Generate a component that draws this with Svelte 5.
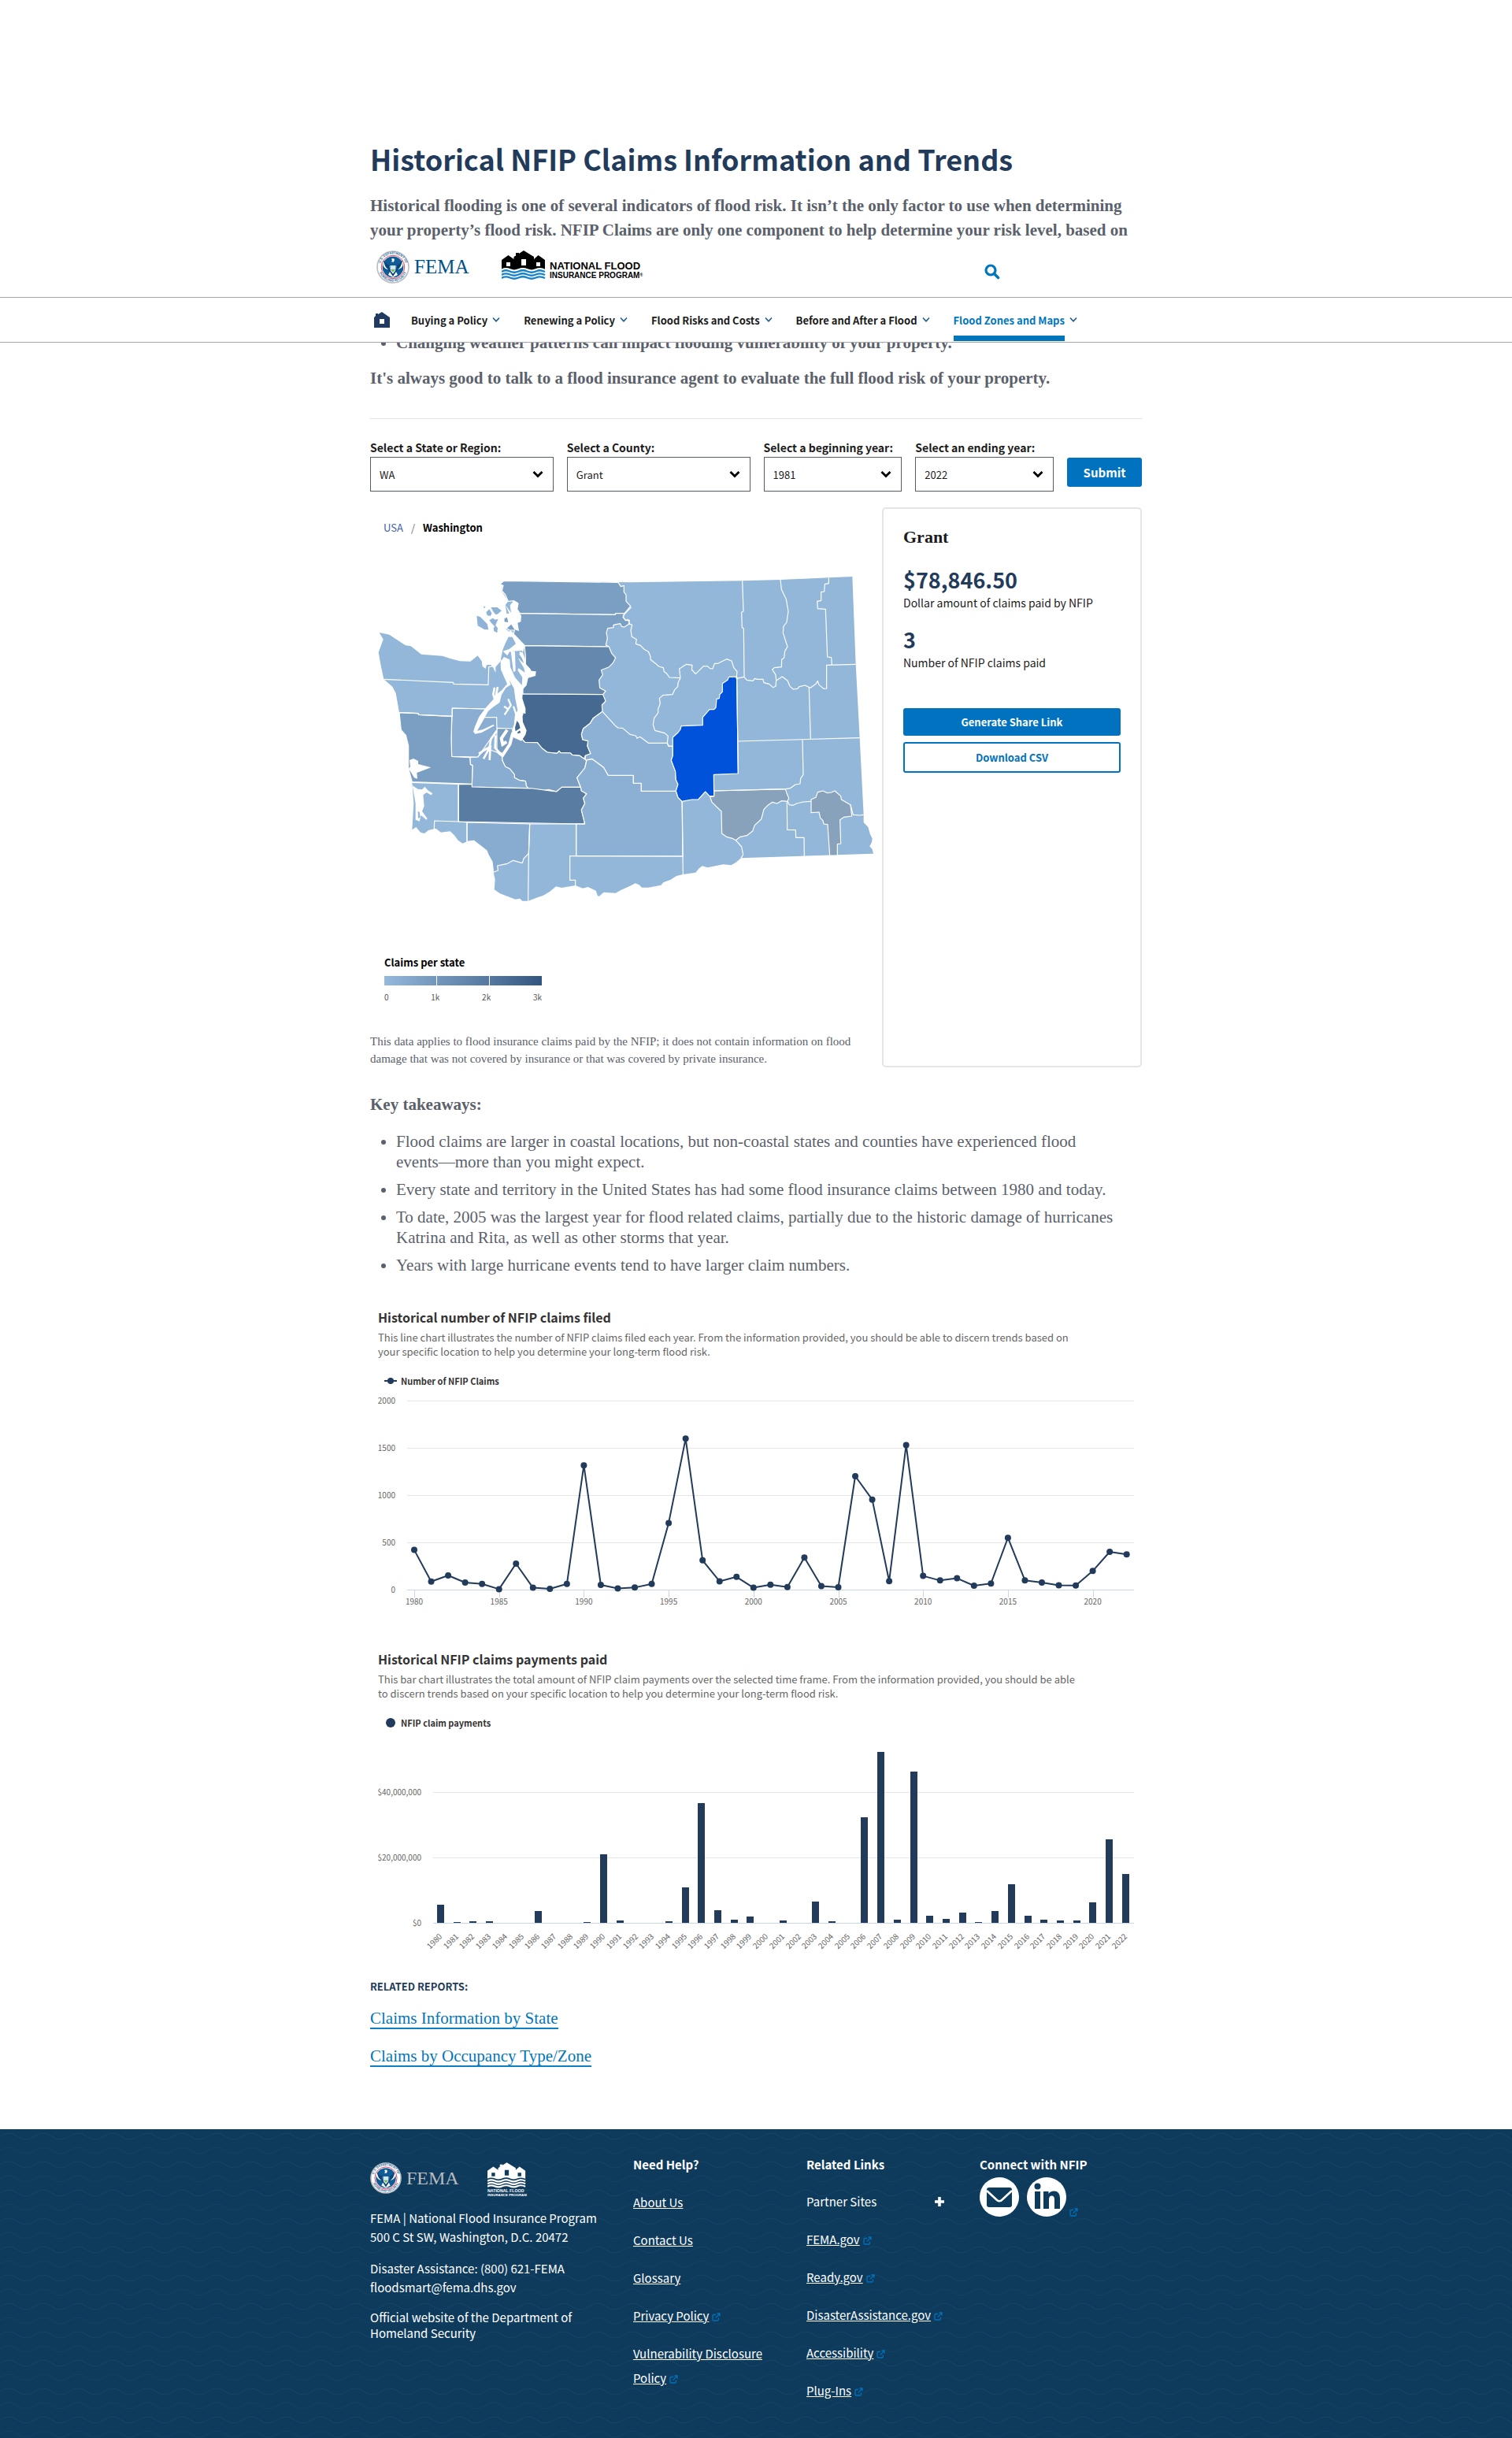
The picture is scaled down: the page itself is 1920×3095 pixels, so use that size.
<script lang="ts">
  const navItems = [
    { label: 'Buying a Policy', active: false },
    { label: 'Renewing a Policy', active: false },
    { label: 'Flood Risks and Costs', active: false },
    { label: 'Before and After a Flood', active: false },
    { label: 'Flood Zones and Maps', active: true }
  ];

  const filters = [
    { id: 'state', label: 'Select a State or Region:', value: 'WA', wide: true },
    { id: 'county', label: 'Select a County:', value: 'Grant', wide: true },
    { id: 'begin', label: 'Select a beginning year:', value: '1981', wide: false },
    { id: 'end', label: 'Select an ending year:', value: '2022', wide: false }
  ];

  const takeaways = [
    'Flood claims are larger in coastal locations, but non-coastal states and counties have experienced flood events—more than you might expect.',
    'Every state and territory in the United States has had some flood insurance claims between 1980 and today.',
    'To date, 2005 was the largest year for flood related claims, partially due to the historic damage of hurricanes Katrina and Rita, as well as other storms that year.',
    'Years with large hurricane events tend to have larger claim numbers.'
  ];

  const helpLinks = [
    { label: 'About Us', external: false },
    { label: 'Contact Us', external: false },
    { label: 'Glossary', external: false },
    { label: 'Privacy Policy', external: true },
    { label: 'Vulnerability Disclosure Policy', external: true }
  ];
  const relatedLinks = ['FEMA.gov', 'Ready.gov', 'DisasterAssistance.gov', 'Accessibility', 'Plug-Ins'];

  const firstYear = 1980;
  const claims = [420, 85, 150, 75, 60, 5, 275, 20, 8, 60, 1315, 50, 12, 22, 60, 705, 1597, 310, 88, 135, 20, 52, 28, 340, 38, 25, 1200, 953, 90, 1530, 145, 97, 120, 42, 65, 548, 98, 75, 45, 43, 197, 400, 373];
  // payments in millions of dollars
  const payments = [5.6, 0.3, 0.5, 0.5, 0, 0, 3.6, 0, 0, 0.3, 21, 0.7, 0, 0, 0.5, 10.9, 36.7, 3.9, 1, 2, 0, 0.7, 0, 6.5, 0.5, 0, 32.3, 52.4, 1, 46.3, 2.2, 1.2, 3.1, 0.3, 3.6, 11.8, 2.2, 1, 0.7, 0.7, 6.3, 25.6, 15];

  const lineX = (i: number) => 56 + i * 21.54;
  const lineY = (v: number) => 256 - v * 0.12;
  const linePoints = claims.map((v, i) => `${lineX(i)},${lineY(v)}`).join(' ');
  const barX = (i: number) => Math.round(85 + i * 20.71);
  const barH = (v: number) => Math.round(v * 4.15);

  // Map polygons; eastern counties are drawn in a group shifted by 990 units.
  const west = [
    { c: '#7b9fc3', p: '540,112 975,118 985,134 997,130 997,155 1005,165 1005,190 1022,208 998,237 966,236 963,241 600,236 590,220 594,198 578,188 556,190 545,165 532,150 537,130 525,125' },
    { c: '#7ca0c4', p: '590,236 963,241 966,236 1000,236 993,250 1003,263 1013,260 1018,275 998,288 988,286 983,275 957,280 957,290 935,293 930,310 934,330 928,357 940,363 618,359 575,320 580,300 560,300 540,285 540,255 570,240' },
    { c: '#6589ae', p: '618,359 940,363 950,388 965,405 955,425 940,440 910,452 916,470 902,490 905,520 927,532 917,545 612,543 612,500 640,450 622,430 622,400' },
    { c: '#456990', p: '600,543 917,545 927,570 913,585 915,610 880,635 868,655 842,675 835,697 840,717 860,722 858,742 870,770 850,778 845,790 828,778 800,775 793,768 755,767 750,760 742,769 705,765 685,750 667,728 620,727 600,705 600,640 612,620' },
    { c: '#7a9dc2', p: '575,705 600,705 620,727 667,728 685,750 705,765 742,769 750,760 755,767 793,768 800,775 828,778 845,790 855,795 848,825 818,862 832,898 760,898 740,915 710,907 690,911 632,902 625,893 622,875 600,872 580,862 580,850 562,828 545,820 533,795 533,782 513,765 513,673 575,675' },
    { c: '#89add0', p: '410,785 440,783 470,750 513,765 533,782 533,795 545,820 562,828 580,850 580,862 600,872 622,875 625,893 632,902 418,897 420,815 412,812' },
    { c: '#8aadd1', p: '343,597 475,600 455,632 512,632 513,680 440,783 341,781 339,715' },
    { c: '#7b9fc3', p: '141,614 213,617 215,622 341,628 339,715 341,781 410,785 412,812 420,815 418,886 190,878 176,827 176,740 166,700 148,680' },
    { c: '#587ca2', p: '367,886 418,887 418,897 650,903 710,911 740,915 760,898 832,898 835,912 855,923 842,940 848,960 835,985 848,1035 838,1038 367,1029' },
    { c: '#88acd0', p: '399,1032 638,1038 634,1150 615,1170 610,1187 575,1177 550,1190 535,1193 515,1197 517,1215 500,1222 495,1182 480,1155 474,1140 455,1125 425,1102 399,1105' },
    { c: '#8cb0d4', p: '855,795 875,790 900,808 920,823 937,853 1033,853 1033,883 1063,883 1063,913 1195,913 1203,937 1218,952 1221,1161 815,1160 815,1038 848,1038 835,985 848,960 842,940 855,923 835,912 832,898 818,862 848,825' },
    { c: '#8db1d4', p: '915,610 965,665 975,672 992,673 1020,697 1042,702 1047,712 1058,706 1090,730 1162,730 1167,742 1183,742 1183,778 1177,795 1193,838 1195,870 1203,887 1195,913 1063,913 1063,883 1033,883 1033,853 937,853 920,823 900,808 875,790 850,795 850,778 870,770 858,742 860,722 840,717 835,697 842,675 868,655 880,635' }
  ];
  const westLines = [
    '82,487 347,499 348,505 480,508 482,440 500,437',
    '141,614 213,617 215,622 343,628 343,597 475,600',
    '191,880 366,886 366,1029 275,1026 274,1062',
    '366,1029 399,1032 399,1105',
    '638,1038 634,1150 632,1331',
    '638,1038 848,1038',
    '815,1038 815,1160',
    '1222,1161 791,1160 791,1252 812,1252 812,1274'
  ];
  const east = [
    { c: '#88a2bb', p: '350,912 622,905 627,920 635,940 630,952 607,950 590,960 573,955 555,967 540,982 530,1020 505,1043 497,1065 475,1082 450,1087 433,1100 420,1093 400,1088 380,1075 378,990 342,955 335,935 350,932' },
    { c: '#88a2bb', p: '720,945 738,937 745,917 765,912 782,920 797,918 810,912 833,932 835,945 870,965 875,1008 845,1012 830,1022 833,1113 820,1115 820,1158 791,1158 783,1040 768,1038 765,1025 755,1015 750,993 720,995' },
    { c: '#0052da', p: '437,478 407,478 402,490 382,503 382,535 372,545 370,560 360,562 357,595 350,602 333,602 307,632 307,662 225,665 222,678 213,690 193,708 193,778 187,795 203,838 205,870 213,887 205,912 213,937 228,952 265,945 290,945 317,915 333,932 350,932 349,850 442,846' }
  ];
  const eastLines = [
    '35,212 5,243 5,253 15,263 28,262 25,275 38,280 33,300 37,325 55,335 52,352 70,358 83,372 100,382 108,400 108,412 125,425 140,438 157,443 160,458 170,465 180,480 222,482',
    '222,482 218,447 245,430 267,433 265,450 280,467 310,437 325,437 335,446 345,447 352,427 365,427 398,410 417,417 425,442 438,458 435,484 465,478',
    '458,112 462,228 455,232 457,290 463,293 465,478',
    '222,482 213,500 212,515 200,527 192,545 155,548 142,560 145,580 137,600 137,615 122,635 118,660 125,682 162,692 175,703 172,730 177,742 193,742',
    '437,478 442,846',
    '603,108 607,145 625,182 633,228 627,270 615,285 613,310 630,363 620,380 617,405 608,412 607,440 580,443 572,450 585,470 587,492',
    '465,478 475,490 498,493 505,484 515,487 537,487 540,500 560,505 575,518 585,514 587,492 610,477 630,492 640,515 652,525 668,523 675,515 697,510 717,520 738,505 745,493 750,508 768,523 779,522 779,433 890,430',
    '787,100 787,122 772,125 770,153 758,155 758,187 743,190 745,218 775,220 782,402 797,404 799,432',
    '712,517 718,715',
    '441,723 905,710',
    '687,718 690,850 680,865 678,885 660,888 640,902 622,905 350,912',
    '630,952 637,965 652,967 665,960 690,954 718,952',
    '870,965 880,1003 905,1005 920,1003',
    '229,952 231,1161 232,1230',
    '433,1100 455,1125 461,1155 453,1168',
    '628,955 629,1060 661,1061 662,1090 693,1090 694,1162'
  ];
  const stateOutline =
    '540,112 1020,118 1448,112 1593,108 1777,100 1867,96 1880,430 1895,710 1910,1003 1910,1032 1927,1050 1935,1078 1943,1093 1941,1108 1933,1123 1943,1135 1947,1151 1443,1168 1423,1185 1405,1195 1375,1192 1315,1204 1295,1198 1282,1208 1270,1223 1222,1230 1197,1236 1175,1250 1148,1260 1138,1271 1090,1280 1065,1280 1055,1270 1040,1264 1020,1274 985,1290 965,1301 920,1298 903,1313 897,1312 890,1292 860,1278 840,1283 812,1272 760,1281 738,1276 715,1295 690,1310 668,1318 632,1331 610,1331 600,1322 583,1325 525,1303 503,1288 506,1250 500,1222 495,1182 480,1155 474,1140 455,1125 425,1102 400,1105 382,1112 365,1100 350,1080 335,1066 300,1070 280,1055 252,1062 237,1074 222,1070 205,1050 190,1060 196,960 190,880 176,827 176,740 166,700 148,680 141,614 128,540 115,515 82,487 70,430 62,385 80,335 65,309 103,317 165,358 185,361 225,392 305,398 335,408 372,418 412,419 440,397 458,418 500,420 527,415 535,375 545,350 565,310 540,290 540,255 550,235 545,205 556,190 530,150 535,130 525,125';
  const water = [
    '545,203 567,234 563,205 577,188 594,196 590,222 606,245 604,268 592,272 597,303 580,298 568,278 545,298 526,290 540,268 556,270 552,252 538,250 540,238 560,236',
    '565,300 620,357 612,385 608,378 575,380 560,383 553,397 536,380 560,372 585,352 572,326 548,325 532,345',
    '440,397 456,405 520,392 530,415 508,440 508,462 498,442 490,432 474,432 470,447 458,438 455,418',
    '600,382 611,385 620,408 622,430 645,455 662,457 660,474 632,482 626,510 612,525 610,560 622,598 622,618 610,616 612,650 626,682 622,698 606,722 575,708 570,682 578,660 582,622 592,606 583,560 578,522 560,490 566,508 547,520 531,545 523,576 500,592 480,608 457,650 438,683 460,678 500,659 503,664 455,690 430,695 423,686 430,665 445,630 470,596 498,565 510,545 532,528 552,505 528,450 527,420 540,402 562,412 564,440 582,480 608,510 610,480 592,452 596,445 620,462 616,445 596,410',
    '566,380 582,382 584,455 576,460',
    '180,795 195,789 213,798 213,810 262,823 208,843 210,866 198,862 185,840 176,828 183,820',
    '191,892 212,905 228,907 238,896 250,910 268,922 262,928 245,918 232,928 236,970 228,990 248,1018 244,1022 224,1005 218,1028 203,1022 203,960'
  ];
</script>

{#snippet chevron()}
  <svg class="chev" viewBox="0 0 10 8" width="10" height="8" aria-hidden="true"><path d="M1 1.5 5 5.8 9 1.5" fill="none" stroke="#1f5b8c" stroke-width="1.6" /></svg>
{/snippet}

{#snippet ext()}
  <svg class="ext" viewBox="0 0 11 11" width="11" height="11" aria-hidden="true"><path d="M5 2.5H2.2q-1.2 0-1.2 1.2v5.1q0 1.2 1.2 1.2h5q1.2 0 1.2-1.2V6.5M6.5 1H10v3.5M10 1 4.8 6.6" fill="none" stroke="#0072bc" stroke-width="1.3" /></svg>
{/snippet}

{#snippet seal(size: number)}
  <svg viewBox="0 0 42 42" width={size} height={size} aria-hidden="true">
    <defs>
      <path id="ring-top-{size}" d="M4.4 21a16.6 16.6 0 0 1 33.2 0" />
      <path id="ring-low-{size}" d="M2.6 21a18.4 18.4 0 0 0 36.8 0" />
    </defs>
    <circle cx="21" cy="21" r="20" fill="#fff" stroke="#b9bcc0" stroke-width="1.6" />
    <text class="ring"><textPath href="#ring-top-{size}" startOffset="50%" text-anchor="middle">U.S. DEPARTMENT OF</textPath></text>
    <text class="ring"><textPath href="#ring-low-{size}" startOffset="50%" text-anchor="middle">HOMELAND SECURITY</textPath></text>
    <circle cx="21" cy="21" r="14.8" fill="#fff" stroke="#e0354a" stroke-width="0.9" />
    <circle cx="21" cy="21" r="13.4" fill="#0f5c97" />
    <path d="M8.5 14q4 5 8 6l-1 4q-5 0-7-5zM33.500 14q-4 5-8 6l1 4q5 0 7-5zM15 31l3-6h6l3 6-6 3z" fill="#fff" />
    <path d="M9 12q2 5 7 6.500l1 6 4 5 4-5 1-6q5-1.500 7-6.500-1 9-6 12l-6 9-6-9q-5-3-6-12z" fill="#0a4478" />
    <path d="M19 10.500q3-1.500 4 1l-1 3h-3l1-2z" fill="#fff" />
    <path d="M17.500 19h7v4q0 3-3.500 5-3.500-2-3.500-5z" fill="#cfe6f5" />
    <path d="M18 24h6l-3 3.500z" fill="#7fb24a" />
  </svg>
{/snippet}

{#snippet houses(ink: string, wave: string)}
  <path d="M0 25V12l8.500-6 7 5V8L18 6.500V3h4v1l6-4 13 8v3l5.500-5 8.500 6v13z" fill={ink} />
  <path d="M6 15h5v5H6zM25 11h6v8h-6zM44 15h5v5h-5z" fill={wave === '#fff' ? '#0e3a5c' : '#fff'} />
  <g fill="none" stroke={wave} stroke-width="2.400">
    <path d="M0 25q5-3 10.500-.5t11 0 11 0 11 0 11.500 .5" stroke-width="2.500" stroke={wave === '#fff' ? '#0e3a5c' : '#fff'} />
    <path d="M0 27q5-3 10.500-.5t11 0 11 0 11 0 11.500 .5M0 31q5-3 10.500-.5t11 0 11 0 11 0 11.500 .5M0 35q5-3 10.500-.5t11 0 11 0 11 0 11.500 .5" />
  </g>
{/snippet}

<div class="page">
  <header class="site-header">
    <div class="wrap brand-row">
      <a class="brand" href="#fema" aria-label="FEMA">{@render seal(42)}<span class="fema">FEMA</span></a>
      <a class="nfip" href="#nfip" aria-label="National Flood Insurance Program">
        <svg viewBox="0 0 182 38" width="182" height="38" aria-hidden="true">
          {@render houses('#000', '#1583cc')}
          <text class="nfip-a" x="61" y="24">NATIONAL FLOOD</text>
          <text class="nfip-b" x="61" y="35">INSURANCE PROGRAM<tspan class="reg" dy="-2">®</tspan></text>
        </svg>
      </a>
      <button class="search" aria-label="Search">
        <svg viewBox="0 0 20 20" width="20" height="20"><circle cx="8" cy="8" r="6" fill="none" stroke="#0076bd" stroke-width="3.200" /><path d="m12.500 12.500 5 5" stroke="#0076bd" stroke-width="3.600" stroke-linecap="round" /></svg>
      </button>
    </div>
    <nav class="nav">
      <div class="wrap nav-in">
        <a href="#home" class="home" aria-label="Home">
          <svg viewBox="0 0 20 20" width="20" height="20"><path fill="#203b5f" d="M0 20V7l2-2V2h3v1l5-3 10 7v13z" /><path fill="#fff" d="M7 9h6v6H7z" /></svg>
        </a>
        <div class="nav-list">
          {#each navItems as item}
            <a href="#nav" class="nav-item"><span class:active={item.active}>{item.label}</span>{@render chevron()}</a>
          {/each}
        </div>
      </div>
    </nav>
  </header>

  <main class="wrap">
    <h1>Historical NFIP Claims Information and Trends</h1>
    <p class="lead intro">Historical flooding is one of several indicators of flood risk. It isn’t the only factor to use when determining your property’s flood risk. NFIP Claims are only one component to help determine your risk level, based on</p>
    <ul class="bullets factors"><li>Changing weather patterns can impact flooding vulnerability of your property.</li></ul>
    <p class="lead closing">It's always good to talk to a flood insurance agent to evaluate the full flood risk of your property.</p>
    <hr />

    <form class="filters">
      {#each filters as f}
        <div class="field" class:wide={f.wide}>
          <label for={f.id}>{f.label}</label>
          <div class="select">
            <select id={f.id}><option>{f.value}</option></select>
            <svg viewBox="0 0 14 10" width="14" height="10" aria-hidden="true"><path d="m1.500 2 5.500 5.500L12.500 2" fill="none" stroke="#000" stroke-width="2.800" /></svg>
          </div>
        </div>
      {/each}
      <button type="button" class="submit">Submit</button>
    </form>

    <section class="explore">
      <div class="map-col">
        <div class="crumbs"><a href="#usa">USA</a><span class="sep">/</span><strong>Washington</strong></div>
        <svg class="map" viewBox="30 0 1950 1500" role="img" aria-label="Washington counties">
          <polygon points={stateOutline} fill="#93b7d9" />
          <g stroke="#fff" stroke-width="3.500" stroke-linejoin="round">
            {#each west as s}<polygon points={s.p} fill={s.c} />{/each}
            {#each westLines as l}<polyline points={l} fill="none" />{/each}
            <g transform="translate(990 0)">
              {#each east as s}<polygon points={s.p} fill={s.c} />{/each}
              {#each eastLines as l}<polyline points={l} fill="none" />{/each}
            </g>
          </g>
          {#each water as w}<polygon points={w} fill="#fff" />{/each}
          <g fill="none" stroke="#fff">
            <path stroke-width="8" d="M504 518 499 545 508 572M516 516l-8 40M512 684 490 715 485 745 444 770M490 738 462 790M488 740l-3 55M508 700l-2 48 26 28" />
            <path stroke-width="12" d="M574 690 562 735 535 776 524 768M552 680 530 712 535 735 550 725" />
            <path stroke-width="7" d="M556 562l10 24-24 36M540 590l18 12M576 590l10 30" />
            <path stroke-width="5" d="M538 440l12 30 18 22M346 1096l10 14h18" />
          </g>
          <path fill="#8fb3d6" d="m436 245 14 5 26 26 5 22-15 0-26-15zM462 208l8 4-6 5zM472 232l12-12 10 16-6 10-12-2zM490 213l24 0 17 13-14 12-8 3-9-10zM484 262l14-8 8 6 12-3-8 18-4 12-14-14zM500 292l8-10 8 10-2 18-12-6zM212 990l6 2 3 22-8 2zM598 392l10 14 8 20-10-8-12-14z" />
          <path fill="#456990" d="m589 645 8 10 5 18-18 12-2-14zM590 690l10-8 4 8-10 4z" />
        </svg>
        <div class="legend">
          <strong>Claims per state</strong>
          <div class="ramp"><i></i><i></i><i></i></div>
          <div class="ramp-labels"><span>0</span><span>1k</span><span>2k</span><span>3k</span></div>
        </div>
        <p class="note">This data applies to flood insurance claims paid by the NFIP; it does not contain information on flood damage that was not covered by insurance or that was covered by private insurance.</p>
      </div>
      <aside class="card">
        <h2>Grant</h2>
        <div class="stat">$78,846.50</div>
        <div class="stat-label">Dollar amount of claims paid by NFIP</div>
        <div class="stat">3</div>
        <div class="stat-label">Number of NFIP claims paid</div>
        <button class="share">Generate Share Link</button>
        <button class="csv">Download CSV</button>
      </aside>
    </section>

    <p class="lead key">Key takeaways:</p>
    <ul class="bullets takeaways">
      {#each takeaways as t}<li>{t}</li>{/each}
    </ul>

    <section class="chart">
      <h3>Historical number of NFIP claims filed</h3>
      <p>This line chart illustrates the number of NFIP claims filed each year. From the information provided, you should be able to discern trends based on your specific location to help you determine your long-term flood risk.</p>
      <div class="series">
        <svg viewBox="0 0 16 12" width="16" height="12" aria-hidden="true"><path d="M0 6h16" stroke="#223b5b" stroke-width="2" /><circle cx="8" cy="6" r="4" fill="#223b5b" /></svg>
        Number of NFIP Claims
      </div>
      <svg class="plot" viewBox="0 0 980 283" role="img" aria-label="Number of NFIP claims by year">
        {#each [2000, 1500, 1000, 500, 0] as v}
          <path d="M47 {lineY(v) + 0.5}H970" stroke={v ? '#e6e6e6' : '#ccd6eb'} />
          <text x="32" y={lineY(v) + 4} text-anchor="end">{v}</text>
        {/each}
        {#each claims as _, i}
          {#if i % 5 === 0}
            <path d="M{Math.round(lineX(i)) + 0.5} 256v10" stroke="#ccd6eb" />
            <text x={lineX(i)} y="275" text-anchor="middle">{firstYear + i}</text>
          {/if}
        {/each}
        <polyline points={linePoints} fill="none" stroke="#223b5b" stroke-width="2" stroke-linejoin="round" />
        {#each claims as v, i}<circle cx={lineX(i)} cy={lineY(v)} r="4" fill="#223b5b" />{/each}
      </svg>
    </section>

    <section class="chart second">
      <h3>Historical NFIP claims payments paid</h3>
      <p>This bar chart illustrates the total amount of NFIP claim payments over the selected time frame. From the information provided, you should be able to discern trends based on your specific location to help you determine your long-term flood risk.</p>
      <div class="series">
        <svg viewBox="0 0 16 12" width="16" height="12" aria-hidden="true"><circle cx="8" cy="6" r="6" fill="#223b5b" /></svg>
        NFIP claim payments
      </div>
      <svg class="plot" viewBox="0 0 980 284" role="img" aria-label="NFIP claim payments by year">
        {#each [40, 20, 0] as v}
          <path d="M80 {245.5 - v * 4.15}H970" stroke={v ? '#e6e6e6' : '#ccd6eb'} />
          <text x="65" y={249 - v * 4.15} text-anchor="end">{v ? `$${v},000,000` : '$0'}</text>
        {/each}
        {#each payments as v, i}
          <rect x={barX(i)} y={245 - barH(v)} width="9" height={barH(v)} fill="#223b5b" />
          <text transform="translate({barX(i) + 7} 263) rotate(-45)" text-anchor="end">{firstYear + i}</text>
        {/each}
      </svg>
    </section>

    <section class="reports">
      <h4>RELATED REPORTS:</h4>
      <p><a href="#state-report">Claims Information by State</a></p>
      <p><a href="#zone-report">Claims by Occupancy Type/Zone</a></p>
    </section>
  </main>

  <footer>
    <svg class="waves" width="100%" height="100%" aria-hidden="true">
      <defs><pattern id="waves" width="44" height="36" patternUnits="userSpaceOnUse"><path d="M0 9q11-8 22 0t22 0" fill="none" stroke="#154467" stroke-width="1" /><path d="M0 27q11-8 22 0t22 0" fill="none" stroke="#134163" stroke-width="1" /></pattern></defs>
      <rect width="100%" height="100%" fill="url(#waves)" />
    </svg>
    <div class="wrap foot">
      <div class="about">
        <div class="logos">
          <a class="brand light" href="#fema-footer" aria-label="FEMA">{@render seal(40)}<span class="fema">FEMA</span></a>
          <svg class="nfip-foot" viewBox="0 0 64 50" width="56" height="44" aria-hidden="true">
            {@render houses('#fff', '#fff')}
            <text class="foot-a" x="0" y="43">NATIONAL FLOOD</text>
            <text class="foot-b" x="0" y="49">INSURANCE PROGRAM</text>
          </svg>
        </div>
        <p>FEMA | National Flood Insurance Program<br />500 C St SW, Washington, D.C. 20472</p>
        <p>Disaster Assistance: (800) 621-FEMA<br />floodsmart@fema.dhs.gov</p>
        <p class="official">Official website of the Department of Homeland Security</p>
      </div>
      <div class="col help">
        <h5>Need Help?</h5>
        <ul>
          {#each helpLinks as l}<li><a href="#help">{l.label}</a>{#if l.external}{@render ext()}{/if}</li>{/each}
        </ul>
      </div>
      <div class="col">
        <h5>Related Links</h5>
        <ul>
          <li><button class="partner">Partner Sites<svg viewBox="0 0 14 14" width="14" height="14" aria-hidden="true"><path d="M7 1v12M1 7h12" stroke="#fff" stroke-width="3.600" /></svg></button></li>
          {#each relatedLinks as l}<li><a href="#related">{l}</a>{@render ext()}</li>{/each}
        </ul>
      </div>
      <div class="col">
        <h5>Connect with NFIP</h5>
        <div class="social">
          <a href="#email" aria-label="Email">
            <svg viewBox="0 0 50 50" width="50" height="50"><circle cx="25" cy="25" r="25" fill="#fff" /><rect x="9" y="13" width="32" height="25" rx="3" fill="#0e3a5c" /><path d="m9 17 13 12q3 2.500 6 0l13-12" fill="none" stroke="#fff" stroke-width="2.600" /></svg>
          </a>
          <a href="#linkedin" aria-label="LinkedIn">
            <svg viewBox="0 0 50 50" width="50" height="50"><circle cx="25" cy="25" r="25" fill="#fff" /><g fill="#0e3a5c"><circle cx="13.500" cy="11.500" r="4" /><path d="M10 18h7v22h-7zM21 18h6.500v3q2-3.600 7-3.600 7.500 0 7.500 9.600v13h-7V28.500q0-5-3.500-5t-3.500 5V40h-7z" /></g></svg>
          </a>
          {@render ext()}
        </div>
      </div>
    </div>
  </footer>
</div>

<style>
  :global(body) { margin: 0; background: #fff; }
  .page {
    --sans: 'Noto Sans CJK SC', 'Noto Sans', sans-serif;
    --serif: 'Liberation Serif', serif;
    position: relative;
    font-family: var(--sans);
    font-size: 14px;
    color: #1b1b1b;
  }
  .page * { box-sizing: border-box; }
  h1, h2, h3, h4, h5, p, ul { margin: 0; padding: 0; }
  ul { list-style: none; }
  a { color: inherit; text-decoration: none; }
  button { font-family: inherit; border: 0; padding: 0; background: none; cursor: pointer; }
  svg { display: block; }
  .wrap { width: 100%; max-width: 980px; margin: 0 auto; }

  /* site bar floats over the article text */
  .site-header { position: absolute; top: 306px; left: 0; right: 0; z-index: 2; background: #fff; border-bottom: 1px solid #a4a8ad; }
  .brand-row { display: flex; align-items: flex-start; height: 71px; padding: 12px 180px 0 8px; }
  .brand { display: flex; align-items: center; gap: 6px; }
  .fema { font: 25px/42px var(--serif); color: #005288; }
  .ring { font: bold 4px var(--sans); fill: #2a6ca0; }
  .nfip { margin-left: 42px; }
  .nfip-a { font: bold 13px 'Liberation Sans', sans-serif; }
  .nfip-b { font: bold 10px 'Liberation Sans', sans-serif; }
  .reg { font-size: 5px; }
  .search { margin: 17px 0 0 auto; }
  .nav { border-top: 1px solid #a4a8ad; }
  .nav-in { display: flex; align-items: stretch; gap: 27px; height: 56px; padding-left: 5px; }
  .nav-list { display: flex; gap: 30px; }
  .home { display: flex; align-items: center; }
  .nav-item { display: flex; align-items: center; gap: 6px; padding-bottom: 1px; font-size: 13px; font-weight: 700; white-space: nowrap; }
  .nav-item span { line-height: 38px; padding-top: 10px; border-bottom: 7px solid transparent; }
  .nav-item .active { color: #0076bd; border-color: #0076bd; }

  main { padding: 177px 0 80px; }
  h1 { font-size: 36px; line-height: 48px; color: #223b5b; }
  .lead { font: bold 21px/31px var(--serif); color: #5b616b; }
  .intro { margin-top: 21px; }
  .factors { margin-top: 114px; }
  .factors li { font-weight: 700; }
  .closing { margin-top: 17px; }
  hr { margin: 35px 0 26px; border: 0; height: 1px; background: #e3e3e4; }
  .bullets { padding: 0 30px 0 33px; list-style: disc; font: 21px/26px var(--serif); color: #5b616b; }
  .bullets li + li { margin-top: 9px; }

  .filters { display: flex; gap: 17px; align-items: flex-start; }
  .field { flex: 176 1 0; }
  .field.wide { flex-grow: 233; }
  label { display: block; margin-bottom: 2px; font-size: 14px; line-height: 20px; font-weight: 700; }
  .select { display: grid; align-items: center; }
  .select > * { grid-area: 1 / 1; }
  .select svg { justify-self: end; margin-right: 13px; pointer-events: none; }
  select { appearance: none; width: 100%; height: 44px; padding: 0 11px; border: 1px solid #565c65; border-radius: 0; background: #fff; font: 13px var(--sans); color: #1b1b1b; }
  .submit { flex: 95 1 0; height: 37px; margin-top: 23px; border-radius: 3px; background: #0072bf; color: #fff; font-size: 15px; font-weight: 700; line-height: 37px; }

  .explore { display: grid; grid-template-columns: 650px 1fr; margin-top: 20px; }
  .crumbs { display: flex; gap: 10px; padding: 16px 0 0 17px; line-height: 20px; font-size: 13px; }
  .crumbs a { color: #3f62ad; }
  .crumbs strong { color: #000; }
  .sep { color: #6c757d; }
  .map { width: 100%; margin-top: 20px; }
  .legend { width: 200px; margin: 12px 0 0 18px; }
  .legend strong { display: block; font-size: 13px; line-height: 20px; color: #000; }
  .ramp { display: flex; gap: 1px; height: 12px; margin-top: 7px; }
  .ramp i { flex: 1; background: linear-gradient(90deg, #95b9db, #7397bc); }
  .ramp i:nth-child(2) { background: linear-gradient(90deg, #7397bc, #54789f); }
  .ramp i:nth-child(3) { background: linear-gradient(90deg, #54789f, #335680); }
  .ramp-labels { display: flex; justify-content: space-between; margin-top: 8px; font-size: 10px; line-height: 14px; color: #555; }
  .note { margin-top: 38px; padding-right: 15px; font: 15px/22px var(--serif); color: #5b616b; }
  .card { border: 2px solid #e5e5e5; border-radius: 5px; padding: 21px 25px; }
  h2 { font: bold 22px/30px var(--serif); }
  .stat { margin-top: 20px; font-size: 27px; line-height: 38px; font-weight: 700; color: #223b5b; }
  .stat-label { margin-bottom: 15px; font-size: 14px; line-height: 20px; }
  .stat-label + .stat { margin-top: 18px; }
  .share, .csv { display: block; width: 100%; border-radius: 3px; font-size: 13px; font-weight: 700; }
  .share { height: 35px; margin-top: 48px; background: #0072bf; color: #fff; }
  .csv { height: 39px; margin-top: 8px; border: 2px solid #0072bf; color: #0072bf; }

  .key { margin-top: 32px; }
  .takeaways { margin-top: 18px; }

  .chart { margin-top: 41px; }
  .chart.second { margin-top: 49px; }
  .chart h3 { padding-left: 10px; font-size: 16px; line-height: 24px; color: #333; }
  .chart p { margin-top: 5px; padding: 0 80px 0 10px; font-size: 13px; line-height: 18px; color: #666; }
  .series { display: flex; align-items: center; gap: 5px; margin-top: 19px; padding-left: 18px; font-size: 11px; line-height: 18px; font-weight: 700; color: #333; }
  .plot { width: 100%; font-size: 10px; }
  .plot text { fill: #666; }

  .reports { margin-top: 32px; }
  h4 { font-size: 13px; line-height: 20px; color: #223b5b; margin-bottom: 17px; }
  .reports p { font: 21px/26px var(--serif); color: #0076bd; }
  .reports p + p { margin-top: 22px; }
  .reports a { border-bottom: 2px solid #0f7fc3; }

  footer { position: relative; background: #0e3a5c; color: #fff; }
  .waves { position: absolute; inset: 0; }
  .foot { position: relative; display: grid; grid-template-columns: 334px 220px 220px 1fr; padding: 33px 0 48px; }
  .logos { display: flex; align-items: flex-start; gap: 36px; padding-top: 9px; height: 68px; }
  .light .fema { color: #b9bcc0; font-size: 24px; line-height: 40px; }
  .foot-a { font: bold 6px 'Liberation Sans', sans-serif; fill: #fff; }
  .foot-b { font: bold 5px 'Liberation Sans', sans-serif; fill: #fff; }
  .about p { font-size: 15px; line-height: 24px; margin-bottom: 16px; }
  .about .official { line-height: 20px; padding-right: 40px; }
  h5 { font-size: 15px; line-height: 24px; margin-bottom: 20px; }
  .col { font-size: 15px; }
  .col li { line-height: 31px; margin-bottom: 17px; }
  .col li:last-child { margin-bottom: 0; }
  .help li { padding-right: 40px; }
  .col li a { text-decoration: underline; }
  .ext { display: inline-block; margin-left: 4px; vertical-align: -1px; }
  .partner { display: flex; justify-content: space-between; align-items: center; width: 176px; color: #fff; font-size: 15px; line-height: 30px; }
  .social { display: flex; align-items: flex-end; gap: 10px; margin-top: -16px; }
  .social .ext { margin-left: -6px; }
</style>
